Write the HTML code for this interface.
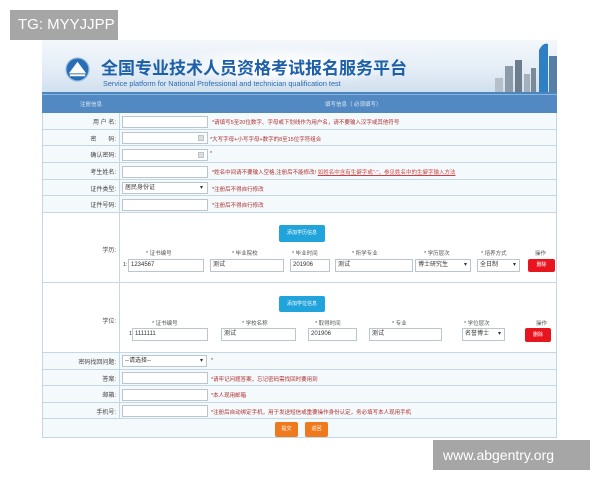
<!DOCTYPE html>
<html><head><meta charset="utf-8"><style>
*{margin:0;padding:0;box-sizing:border-box}
body{width:600px;height:480px;background:#fff;position:relative;overflow:hidden;font-family:"Liberation Sans","Noto Sans CJK SC",sans-serif}
.a{position:absolute}
.wm{background:#a6a6a6;color:#fff;font-size:15px;line-height:30px;padding-left:8px}
.row{position:absolute;left:42px;width:515px;border-bottom:1px solid #c5d7e4;background:#f4f9fc}
.row.w{background:#fff}
.lab{position:absolute;left:0;width:74px;text-align:right;font-size:6px;color:#444;top:4px}
.inp{position:absolute;background:#fff;border:1px solid #b9c6d0;height:12px;font-size:6px;color:#333;line-height:10px;padding-left:2px}
.r{position:absolute;font-size:5.5px;color:#b03030;white-space:nowrap}
.cl{position:absolute;font-size:5.5px;color:#555;white-space:nowrap}
.btn{position:absolute;border-radius:2px;color:#fff;font-size:5px;text-align:center}
</style></head><body>
<div class="a wm" style="left:10px;top:10px;width:108px;height:30px">TG: MYYJJPP</div>
<div class="a wm" style="left:433px;top:440px;width:157px;height:30px;font-size:14px;padding-left:10px">www.abgentry.org</div>

<!-- banner -->
<div class="a" style="left:42px;top:40px;width:515px;height:54px;background:linear-gradient(180deg,#f3f7fb 0%,#e4edf6 55%,#cfdfee 100%);overflow:hidden">
<div class="a" style="left:120px;top:6px;width:240px;height:40px;border-radius:50%;background:radial-gradient(#fff 20%,rgba(255,255,255,0) 70%)"></div>
<svg class="a" style="left:23px;top:17px" width="25" height="25" viewBox="0 0 26 26"><circle cx="13" cy="13" r="12" fill="#2a6fb5"/><path d="M4 17 L13 5 L22 17 Z" fill="#fff"/><path d="M5 18h16v2H5z" fill="#fff"/><circle cx="13" cy="13" r="12" fill="none" stroke="#9cc1e2" stroke-width="1.2"/></svg>
<div class="a" style="left:59px;top:14px;font-size:17px;font-weight:bold;color:#1d5fa8;white-space:nowrap">全国专业技术人员资格考试报名服务平台</div>
<div class="a" style="left:61px;top:39px;font-size:7.3px;color:#2b6aad;white-space:nowrap">Service platform for National Professional and technician qualification test</div>
<svg class="a" style="left:445px;top:0" width="70" height="54" viewBox="0 0 70 54"><rect x="18" y="26" width="8" height="28" fill="#8d9aa8"/><rect x="28" y="20" width="7" height="34" fill="#6d7d8c"/><rect x="37" y="34" width="6" height="20" fill="#a4b0bc"/><rect x="44" y="28" width="5" height="26" fill="#7b8a99"/><path d="M52 54V10q4-8 9-6v50z" fill="#2f7fc4"/><rect x="62" y="16" width="8" height="38" fill="#557ea8"/><rect x="8" y="38" width="8" height="16" fill="#b5c0ca"/></svg>
<div class="a" style="left:0;bottom:0;width:515px;height:2px;background:#4a86c0"></div>
</div>

<!-- header -->
<div class="a" style="left:42px;top:94px;width:515px;height:19px;background:#5289c2;border-top:1px solid #8cb3d9"></div>
<div class="a" style="left:80px;top:100px;font-size:5.5px;color:#dde9f6">注册信息</div>
<div class="a" style="left:325px;top:100px;font-size:5.5px;color:#dde9f6">填写信息（ 必须填写）</div>

<div class="row" style="top:113px;height:17px"><div class="lab">用 户 名:</div><div class="inp" style="left:80px;top:3px;width:86px"></div><div class="r" style="left:170px;top:5px">*请填写5至20位数字、字母或下划线作为用户名，请不要输入汉字或其他符号</div></div>
<div class="row" style="top:130px;height:16px"><div class="lab">密　　码:</div><div class="inp" style="left:80px;top:2px;width:86px"></div><div class="inp" style="left:156px;top:5px;width:6px;height:6px;background:#ddd"></div><div class="r" style="left:168px;top:5px">*大写字母+小写字母+数字的8至15位字符组合</div></div>
<div class="row" style="top:146px;height:17px"><div class="lab">确认密码:</div><div class="inp" style="left:80px;top:3px;width:86px"></div><div class="inp" style="left:156px;top:6px;width:6px;height:6px;background:#ddd"></div><div class="r" style="left:168px;top:5px">*</div></div>
<div class="row" style="top:163px;height:17px"><div class="lab">考生姓名:</div><div class="inp" style="left:80px;top:3px;width:86px"></div><div class="r" style="left:170px;top:5px">*姓名中间请不要输入空格,注册后不能修改! <u style="color:#d04040">如姓名中含有生僻字或"·"，参见姓名中的生僻字输入方法</u></div></div>
<div class="row" style="top:180px;height:16px"><div class="lab">证件类型:</div><div class="inp" style="left:80px;top:2px;width:86px">居民身份证<span style="float:right;margin-right:4px">▾</span></div><div class="r" style="left:170px;top:5px">*注册后不得自行修改</div></div>
<div class="row" style="top:196px;height:17px"><div class="lab">证件号码:</div><div class="inp" style="left:80px;top:3px;width:86px"></div><div class="r" style="left:170px;top:5px">*注册后不得自行修改</div></div>

<div class="row w" style="top:213px;height:70px"><div class="lab" style="top:32px">学历:</div>
<div class="btn" style="left:237px;top:12px;width:46px;height:17px;background:#21a3dc;line-height:17px">添加学历信息</div>
<div class="cl" style="left:104px;top:36px">* 证书编号</div><div class="cl" style="left:190px;top:36px">* 毕业院校</div><div class="cl" style="left:250px;top:36px">* 毕业时间</div><div class="cl" style="left:310px;top:36px">* 所学专业</div><div class="cl" style="left:382px;top:36px">* 学历层次</div><div class="cl" style="left:439px;top:36px">* 培养方式</div><div class="cl" style="left:493px;top:36px">操作</div>
<div class="cl" style="left:81px;top:49px;color:#333">1:</div>
<div class="inp" style="left:86px;top:46px;width:76px;height:13px">1234567</div>
<div class="inp" style="left:168px;top:46px;width:74px;height:13px">测试</div>
<div class="inp" style="left:248px;top:46px;width:40px;height:13px">201906</div>
<div class="inp" style="left:293px;top:46px;width:78px;height:13px">测试</div>
<div class="inp" style="left:373px;top:46px;width:56px;height:13px">博士研究生<span style="float:right;margin-right:3px">▾</span></div>
<div class="inp" style="left:435px;top:46px;width:43px;height:13px">全日制<span style="float:right;margin-right:3px">▾</span></div>
<div class="btn" style="left:486px;top:46px;width:27px;height:13px;background:#e8141e;line-height:13px">删除</div>
</div>

<div class="row w" style="top:283px;height:70px"><div class="lab" style="top:33px">学位:</div>
<div class="btn" style="left:237px;top:13px;width:46px;height:16px;background:#21a3dc;line-height:16px">添加学位信息</div>
<div class="cl" style="left:110px;top:36px">* 证书编号</div><div class="cl" style="left:200px;top:36px">* 学校名称</div><div class="cl" style="left:273px;top:36px">* 取得时间</div><div class="cl" style="left:350px;top:36px">* 专业</div><div class="cl" style="left:422px;top:36px">* 学位层次</div><div class="cl" style="left:494px;top:36px">操作</div>
<div class="cl" style="left:87px;top:48px;color:#333">1:</div>
<div class="inp" style="left:90px;top:45px;width:76px;height:13px">1111111</div>
<div class="inp" style="left:179px;top:45px;width:75px;height:13px">测试</div>
<div class="inp" style="left:266px;top:45px;width:49px;height:13px">201906</div>
<div class="inp" style="left:327px;top:45px;width:73px;height:13px">测试</div>
<div class="inp" style="left:420px;top:45px;width:43px;height:13px">名誉博士<span style="float:right;margin-right:3px">▾</span></div>
<div class="btn" style="left:483px;top:45px;width:26px;height:14px;background:#e8141e;line-height:14px">删除</div>
</div>

<div class="row" style="top:353px;height:17px"><div class="lab">密码找回问题:</div><div class="inp" style="left:80px;top:2px;width:85px">--请选择--<span style="float:right;margin-right:3px">▾</span></div><div class="r" style="left:169px;top:5px">*</div></div>
<div class="row" style="top:370px;height:16px"><div class="lab">答案:</div><div class="inp" style="left:80px;top:2px;width:86px"></div><div class="r" style="left:169px;top:5px">*请牢记问题答案，忘记密码需找回时要用到</div></div>
<div class="row" style="top:386px;height:17px"><div class="lab">邮箱:</div><div class="inp" style="left:80px;top:3px;width:86px"></div><div class="r" style="left:169px;top:5px">*本人现用邮箱</div></div>
<div class="row" style="top:403px;height:16px"><div class="lab">手机号:</div><div class="inp" style="left:80px;top:2px;width:86px"></div><div class="r" style="left:169px;top:5px">*注册后自动绑定手机，用于发送短信或重要操作身份认定，务必填写本人现用手机</div></div>
<div class="row" style="top:419px;height:19px"><div class="btn" style="left:233px;top:3px;width:23px;height:15px;background:#ef7a1e;line-height:15px">提交</div><div class="btn" style="left:263px;top:3px;width:23px;height:15px;background:#ef7a1e;line-height:15px">返回</div></div>

<div class="a" style="left:42px;top:113px;width:515px;height:325px;border:1px solid #c5d7e4;border-top:none"></div>
<div class="a" style="left:119px;top:113px;width:1px;height:306px;background:#c5d7e4"></div>
</body></html>
